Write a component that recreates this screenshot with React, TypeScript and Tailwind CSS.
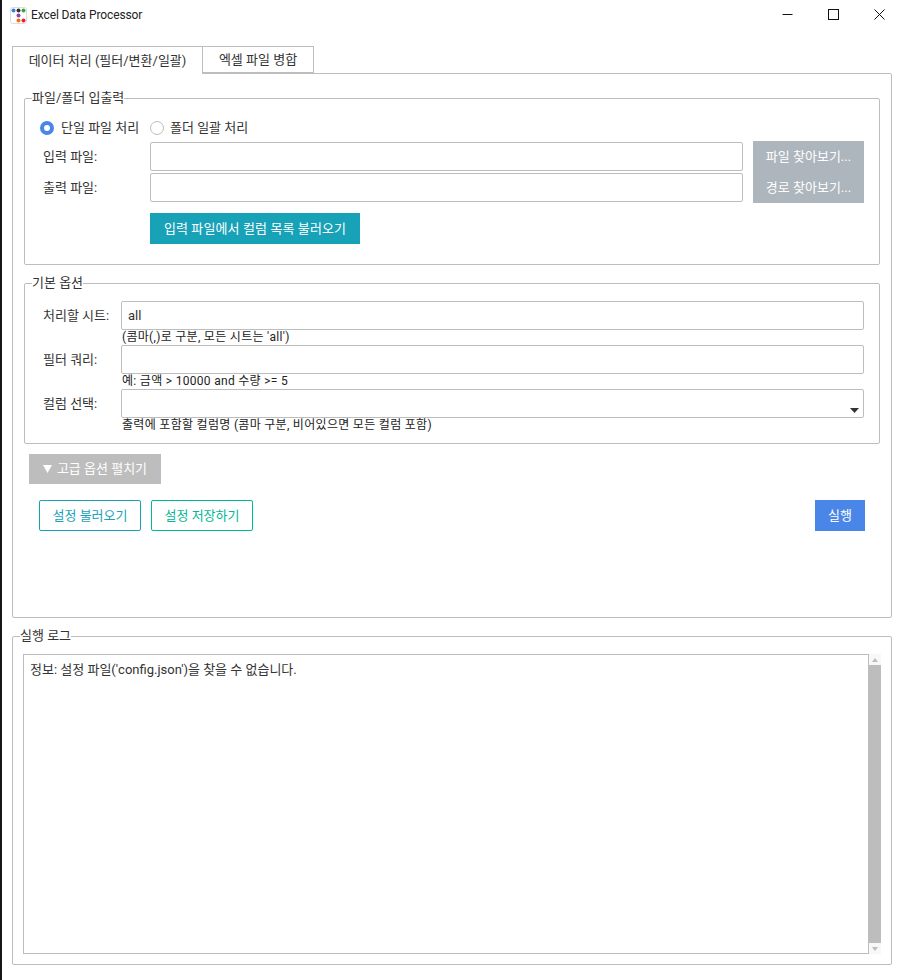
import React from 'react';

const font = "font-['Roboto','Noto_Sans_CJK_KR',sans-serif]";
const inputBox = 'h-[29px] border border-[#bdbdbd] rounded-[2px] bg-white flex items-center';

const Group: React.FC<{ title: string; className?: string; children: React.ReactNode }> = ({
    title,
    className = '',
    children,
}) => (
    <fieldset className={`border border-[#bdbdbd] rounded-[2px] min-w-0 ${className}`}>
        <legend className="ml-[7px] text-[13px] leading-[14px] text-[#333]">{title}</legend>
        {children}
    </fieldset>
);

const Radio: React.FC<{ checked?: boolean; label: string; className?: string }> = ({ checked, label, className = '' }) => (
    <label className={`flex items-center ${className}`}>
        {checked ? (
            <span className="w-[14px] h-[14px] rounded-full border-[4px] border-[#4a86e8] bg-white" />
        ) : (
            <span className="w-[14px] h-[14px] rounded-full border border-[#bdbdbd] bg-white" />
        )}
        <span>{label}</span>
    </label>
);

const FormRow: React.FC<{ label: string; value?: string; hint: string; arrow?: boolean }> = ({ label, value, hint, arrow }) => (
    <div className="flex pl-[18px] pr-[15px]">
        <span className="w-[78px] h-[29px] flex items-center shrink-0">{label}</span>
        <div className="flex-1 min-w-0">
            <div className={`${inputBox} relative px-[6px]`}>
                {value}
                {arrow && (
                    <svg className="absolute right-[4px] bottom-[4px]" width="9" height="5" viewBox="0 0 9 5">
                        <path d="M0 0h9L4.5 5z" fill="#333" />
                    </svg>
                )}
            </div>
            <div className="h-[15px] leading-[15px] text-[12px] tracking-[0.3px] pl-[1px] text-[#222] whitespace-nowrap">{hint}</div>
        </div>
    </div>
);

export default function App() {
    return (
        <div className={`w-[902px] h-[980px] flex bg-white overflow-hidden text-[13px] text-[#333] ${font}`}>
            <div className="w-[2px] bg-[#14161a] shrink-0" />
            <div className="flex-1 min-w-0 flex flex-col">
                {/* Title bar */}
                <div className="h-[30px] flex items-center pl-[8px] pr-[17px] shrink-0">
                    <svg width="17" height="17" viewBox="0 0 17 17">
                        <rect x="0.5" y="0.5" width="16" height="16" rx="2" fill="#fff" stroke="#ddd" />
                        <circle cx="3.5" cy="3.5" r="2" fill="#3b7ddd" />
                        <circle cx="8.5" cy="3.5" r="2" fill="#333" />
                        <circle cx="13.5" cy="3.5" r="2" fill="#3aa53a" />
                        <circle cx="8.5" cy="8.5" r="2" fill="#8e44ad" />
                        <circle cx="8.5" cy="13.5" r="2" fill="#f07020" />
                        <circle cx="13.5" cy="13.5" r="2" fill="#e8203a" />
                    </svg>
                    <span className="ml-[4px] text-[12px] tracking-[-0.1px] text-[#222]">Excel Data Processor</span>
                    <div className="ml-auto mb-[2px] flex items-center gap-[35px]">
                        <svg width="11" height="11" viewBox="0 0 11 11">
                            <path d="M0.5 5.5h10" stroke="#111" fill="none" />
                        </svg>
                        <svg width="11" height="11" viewBox="0 0 11 11">
                            <rect x="0.5" y="0.5" width="10" height="10" stroke="#111" fill="none" />
                        </svg>
                        <svg width="11" height="11" viewBox="0 0 11 11">
                            <path d="M0.5 0.5l10 10M10.5 0.5l-10 10" stroke="#111" fill="none" />
                        </svg>
                    </div>
                </div>

                <div className="flex-1 flex flex-col pl-[10px] pr-[10px] pt-[16px]">
                    {/* Tabs */}
                    <div className="flex h-[28px] shrink-0 relative z-10">
                        <div className="w-[191px] h-[28px] border border-b-0 border-[#bdbdbd] bg-white flex items-center justify-center">
                            데이터 처리 (필터/변환/일괄)
                        </div>
                        <div className="w-[111px] h-[27px] border border-l-0 border-[#bdbdbd] bg-white flex items-center justify-center">
                            엑셀 파일 병합
                        </div>
                    </div>

                    {/* Main pane */}
                    <div className="h-[545px] -mt-[1px] border border-[#bdbdbd] rounded-[2px] px-[11px] pt-[17px] flex flex-col shrink-0">
                        <Group title="파일/폴더 입출력" className="h-[174px]">
                            <div className="flex items-center h-[14px] mt-[16px] pl-[15px]">
                                <Radio checked label="단일 파일 처리" className="w-[110px] gap-[7px]" />
                                <Radio label="폴더 일괄 처리" className="gap-[6px]" />
                            </div>
                            <div className="flex mt-[6px] pl-[18px] pr-[15px]">
                                <div className="flex-1 min-w-0">
                                    <div className="flex items-center h-[31px]">
                                        <span className="w-[107px] shrink-0">입력 파일:</span>
                                        <div className={`${inputBox} flex-1`} />
                                    </div>
                                    <div className="flex items-center h-[31px]">
                                        <span className="w-[107px] shrink-0">출력 파일:</span>
                                        <div className={`${inputBox} flex-1`} />
                                    </div>
                                </div>
                                <div className="w-[111px] ml-[10px] bg-[#adb5bd] text-white flex flex-col shrink-0">
                                    <span className="h-[31px] flex items-center justify-center">파일 찾아보기...</span>
                                    <span className="h-[31px] flex items-center justify-center">경로 찾아보기...</span>
                                </div>
                            </div>
                            <button className="block ml-[125px] mt-[10px] w-[210px] h-[31px] bg-[#17a2b8] text-white tracking-[0.1px]">
                                입력 파일에서 컬럼 목록 불러오기
                            </button>
                        </Group>

                        <Group title="기본 옵션" className="h-[168px] mt-[11px]">
                            <div className="pt-[11px] flex flex-col">
                                <FormRow label="처리할 시트:" value="all" hint="(콤마(,)로 구분, 모든 시트는 'all')" />
                                <FormRow label="필터 쿼리:" hint="예: 금액 > 10000 and 수량 >= 5" />
                                <FormRow label="컬럼 선택:" arrow hint="출력에 포함할 컬럼명 (콤마 구분, 비어있으면 모든 컬럼 포함)" />
                            </div>
                        </Group>

                        <div className="mt-[10px] ml-[5px] w-[132px] h-[30px] bg-[#bdbdbd] text-white flex items-center justify-center gap-[5px] shrink-0">
                            <svg width="9" height="8" viewBox="0 0 9 8">
                                <path d="M0 0h9L4.5 8z" fill="#fff" />
                            </svg>
                            <span>고급 옵션 펼치기</span>
                        </div>

                        <div className="flex mt-[16px] pl-[15px] pr-[15px] gap-[10px]">
                            <button className="w-[102px] h-[31px] border border-[#17a2b8] text-[#17a2b8] rounded-[2px]">설정 불러오기</button>
                            <button className="w-[102px] h-[31px] border border-[#00b894] text-[#00b894] rounded-[2px]">설정 저장하기</button>
                            <button className="ml-auto w-[50px] h-[31px] bg-[#4a86e8] text-white">실행</button>
                        </div>
                    </div>

                    {/* Log */}
                    <Group title="실행 로그" className="h-[336px] mt-[11px] shrink-0">
                        <div className="flex mt-[11px] ml-[10px] mr-[10px] h-[300px]">
                            <div className="flex-1 min-w-0 border border-[#bdbdbd] px-[6px] py-[6px] leading-[17px]">
                                정보: 설정 파일('config.json')을 찾을 수 없습니다.
                            </div>
                            <div className="w-[12px] flex flex-col bg-[#f8f8f8] shrink-0">
                                <div className="h-[11px] flex items-center justify-center">
                                    <svg width="6" height="4" viewBox="0 0 6 4">
                                        <path d="M3 0l3 4H0z" fill="#bdbdbd" />
                                    </svg>
                                </div>
                                <div className="flex-1 bg-[#bdbdbd]" />
                                <div className="h-[11px] flex items-center justify-center">
                                    <svg width="6" height="4" viewBox="0 0 6 4">
                                        <path d="M0 0h6L3 4z" fill="#bdbdbd" />
                                    </svg>
                                </div>
                            </div>
                        </div>
                    </Group>
                </div>
            </div>
        </div>
    );
}
